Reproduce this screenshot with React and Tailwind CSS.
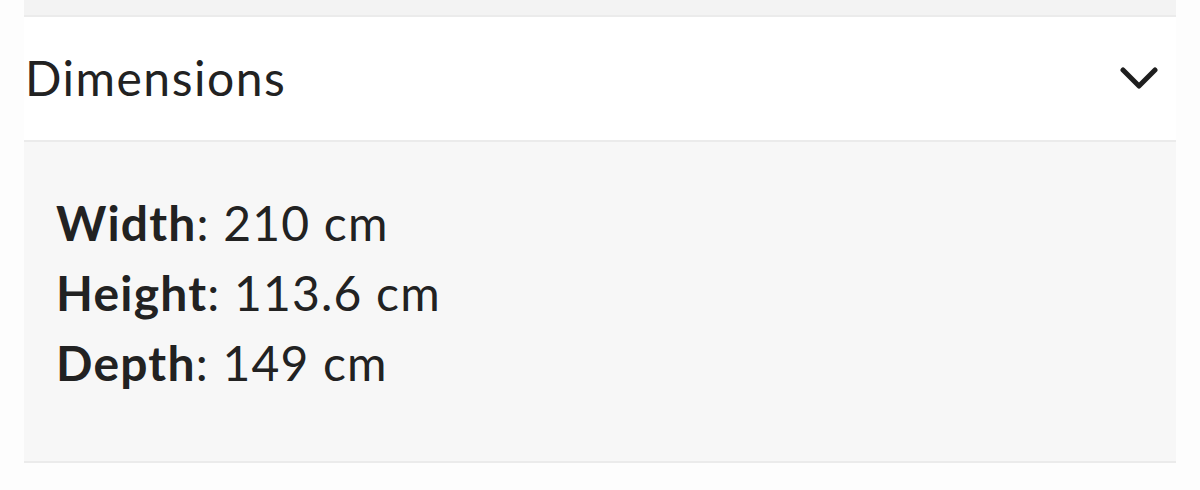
export default function App() {
  return (
    <div className="w-[1200px] h-[490px] bg-[#fdfdfd] overflow-hidden" style={{ fontFamily: "Lato, 'Noto Sans', sans-serif" }}>
      <div className="mx-6 flex flex-col">
        <div className="h-[17px] bg-[#f3f3f3] border-b-2 border-[#ebebeb]" />
        <div className="h-[125px] bg-white border-b-2 border-[#ebebeb] flex items-center justify-between pl-[1px] pr-[18px]">
          <span className="text-[48px] leading-none text-[#222] tracking-[1.5px] -mt-[2px]">Dimensions</span>
          <svg width="38" height="24" viewBox="0 0 38 24" fill="none" stroke="#1e1e1e" strokeWidth="5" strokeLinecap="round" strokeLinejoin="round" className="mt-[1px]">
            <path d="M3 3 L19 19 L35 3" />
          </svg>
        </div>
        <div className="h-[321px] bg-[#f7f7f7] border-b-2 border-[#ebebeb] pl-8 pt-[46px] text-[48px] leading-[70px] text-[#222] tracking-[1.2px]">
          <div><span className="font-bold">Width</span>: 210 cm</div>
          <div><span className="font-bold">Height</span>: 113.6 cm</div>
          <div><span className="font-bold">Depth</span>: 149 cm</div>
        </div>
      </div>
    </div>
  );
}
